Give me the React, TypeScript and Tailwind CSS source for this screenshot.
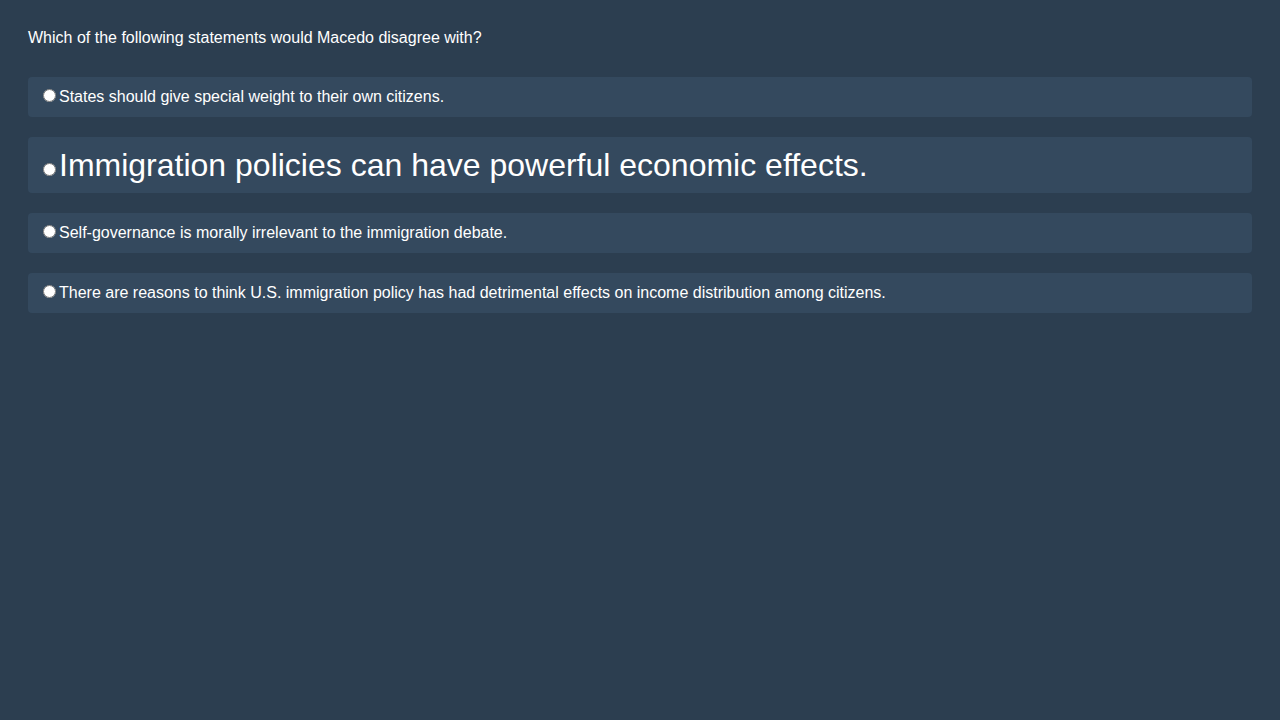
const options = [
  { id: 1, text: "States should give special weight to their own citizens.", big: false },
  { id: 2, text: "Immigration policies can have powerful economic effects.", big: true },
  { id: 3, text: "Self-governance is morally irrelevant to the immigration debate.", big: false },
  {
    id: 4,
    text: "There are reasons to think U.S. immigration policy has had detrimental effects on income distribution among citizens.",
    big: false,
  },
];

export default function App() {
  return (
    <div
      className="min-h-screen w-full bg-[#2c3e50] px-7 pt-[26px] text-white"
      style={{ fontFamily: '"Liberation Sans", Arial, sans-serif' }}
    >
      <p className="text-base leading-6">Which of the following statements would Macedo disagree with?</p>

      <div className="mt-[27px] flex flex-col gap-5">
        {options.map((item) => (
          <label
            key={item.id}
            className="block rounded bg-[#34495e] px-2.5 py-2"
          >
            <input type="radio" name="answer" className="ml-[5px] mr-[3px] mt-[3px]" />
            <span className={item.big ? "text-[32px] leading-10" : "text-base leading-6"}>
              {item.text}
            </span>
          </label>
        ))}
      </div>
    </div>
  );
}
